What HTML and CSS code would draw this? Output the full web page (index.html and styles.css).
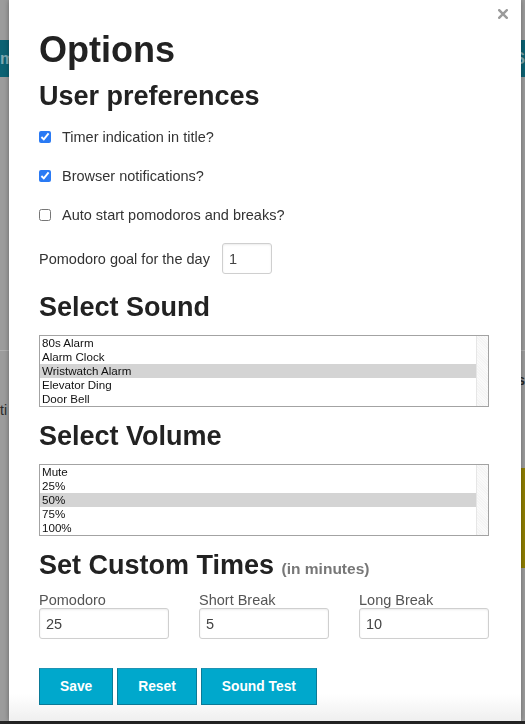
FILE: index.html
```html
<!DOCTYPE html>
<html lang="en">
<head>
<meta charset="utf-8">
<title>Options</title>
<link rel="stylesheet" href="styles.css">
</head>
<body>
<div class="page">
  <div class="band-top"></div>
  <div class="band-teal"><span class="teal-text">m</span><span class="teal-text">S</span></div>
  <div class="band-gap1"></div>
  <div class="band-rule"></div>
  <div class="band-gap2"><span class="bg-text">ti</span><span class="bg-text bold">s</span></div>
  <div class="band-yellow"><div class="yellow-block"></div></div>
  <div class="band-gap3"></div>
  <div class="band-footer"></div>
</div>

<div class="modal" role="dialog" aria-labelledby="opt-title">
  <button class="close" aria-label="Close">
    <svg width="10" height="10" viewBox="0 0 10 10"><path d="M1.2 1.2 L8.8 8.8 M8.8 1.2 L1.2 8.8" stroke="#9b9b9b" stroke-width="2.4" stroke-linecap="square"/></svg>
  </button>

  <h1 class="title" id="opt-title">Options</h1>

  <h2 class="section first">User preferences</h2>
  <label class="check-row"><input type="checkbox" checked><span>Timer indication in title?</span></label>
  <label class="check-row"><input type="checkbox" checked><span>Browser notifications?</span></label>
  <label class="check-row"><input type="checkbox"><span>Auto start pomodoros and breaks?</span></label>

  <div class="goal-row">
    <span>Pomodoro goal for the day</span>
    <input class="goal-input" type="text" value="1">
  </div>

  <h2 class="section">Select Sound</h2>
  <div class="listbox">
    <ul class="options">
      <li>80s Alarm</li>
      <li>Alarm Clock</li>
      <li class="selected">Wristwatch Alarm</li>
      <li>Elevator Ding</li>
      <li>Door Bell</li>
    </ul>
    <div class="track"></div>
  </div>

  <h2 class="section">Select Volume</h2>
  <div class="listbox">
    <ul class="options">
      <li>Mute</li>
      <li>25%</li>
      <li class="selected">50%</li>
      <li>75%</li>
      <li>100%</li>
    </ul>
    <div class="track"></div>
  </div>

  <h2 class="section">Set Custom Times <small>(in minutes)</small></h2>
  <div class="times">
    <label class="field"><span>Pomodoro</span><input type="text" value="25"></label>
    <label class="field"><span>Short Break</span><input type="text" value="5"></label>
    <label class="field"><span>Long Break</span><input type="text" value="10"></label>
  </div>

  <div class="buttons">
    <button class="btn">Save</button>
    <button class="btn">Reset</button>
    <button class="btn">Sound Test</button>
  </div>
</div>
</body>
</html>
```

FILE: styles.css
```css
html, body {
  margin: 0;
  padding: 0;
}

body {
  width: 525px;
  height: 724px;
  overflow: hidden;
  background: #9c9c9c;
  font-family: "Liberation Sans", Arial, sans-serif;
}

.page {
  display: flex;
  flex-direction: column;
}
.band-top { height: 40px; }
.band-teal {
  height: 37px;
  background: #0c6273;
  display: flex;
  justify-content: space-between;
  align-items: center;
  font-weight: bold;
  font-size: 16px;
}
.teal-text { color: #7fa9b1; }
.band-gap1 { height: 273px; }
.band-rule { height: 1px; background: #b0b0b0; }
.band-gap2 {
  height: 117px;
  display: flex;
  justify-content: space-between;
  align-items: center;
  font-size: 14px;
  color: #2a2a2a;
}
.bg-text.bold { font-weight: bold; margin-top: -60px; }
.band-yellow {
  height: 100px;
  display: flex;
  justify-content: flex-end;
}
.yellow-block { width: 10px; background: #8f7e00; }
.band-gap3 { height: 153px; }
.band-footer { height: 3px; background: #262626; }

/* modal */
.modal {
  position: fixed;
  top: 0;
  left: 9px;
  width: 512px;
  height: 721px;
  box-sizing: border-box;
  padding: 30px 32px 0 30px;
  background: linear-gradient(to bottom, #ffffff 0, #ffffff 694px, #efefef 721px);
  box-shadow: 0 0 5px rgba(0, 0, 0, 0.35);
  color: #333;
  font-size: 14.5px;
}

.close {
  position: absolute;
  top: 9px;
  right: 13px;
  width: 10px;
  height: 10px;
  padding: 0;
  border: 0;
  background: none;
  display: flex;
}

.title {
  margin: 0;
  font-size: 36px;
  line-height: 40px;
  font-weight: bold;
  color: #222;
}

.section {
  margin: 14px 0 0;
  font-size: 27px;
  line-height: 30px;
  height: 30px;
  font-weight: bold;
  color: #222;
}
.section.first { margin-top: 11px; }
.section small {
  font-size: 15.5px;
  line-height: 1;
  color: #777;
}

.check-row {
  display: flex;
  align-items: center;
  gap: 11px;
  height: 20px;
  margin-top: 19px;
}
.section.first + .check-row { margin-top: 16px; }
.check-row input {
  margin: 0;
  width: 12px;
  height: 12px;
  accent-color: #2a7af4;
}

.goal-row {
  display: flex;
  align-items: center;
  gap: 12px;
  margin-top: 18px;
  height: 31px;
}
.goal-input {
  width: 50px;
}

input[type="text"] {
  box-sizing: border-box;
  height: 31px;
  margin: 0;
  padding: 0 6px;
  border: 1px solid #cfcfcf;
  border-radius: 3px;
  box-shadow: inset 0 1px 2px rgba(0, 0, 0, 0.08);
  font-family: "Liberation Sans", Arial, sans-serif;
  font-size: 14.5px;
  color: #444;
  background: #fff;
}

.goal-row + .section { margin-top: 18px; }

.listbox {
  margin-top: 13px;
  height: 72px;
  box-sizing: border-box;
  border: 1px solid #a3a3a3;
  display: flex;
  background: #fff;
}
.options {
  list-style: none;
  margin: 0;
  padding: 0;
  flex: 1;
  font-size: 11.6px;
  color: #111;
}
.options li {
  height: 14px;
  line-height: 14px;
  padding-left: 2px;
}
.options li.selected { background: #d4d4d4; }
.track {
  width: 11px;
  border-left: 1px solid #e6e6e6;
  background: repeating-linear-gradient(45deg, #f4f4f4 0, #f4f4f4 1px, #fafafa 1px, #fafafa 2px);
}

.times {
  display: grid;
  grid-template-columns: repeat(3, 130px);
  column-gap: 30px;
  margin-top: 12px;
}
.field {
  display: flex;
  flex-direction: column;
  color: #555;
}
.field span {
  line-height: 16px;
  height: 16px;
}
.field input { width: 130px; }

.buttons {
  display: flex;
  gap: 4px;
  margin-top: 29px;
}
.btn {
  height: 37px;
  padding: 0 20px;
  border: 1px solid #0a7a97;
  border-top-color: #1f93b3;
  background: #00a8cc;
  color: #fff;
  font-family: "Liberation Sans", Arial, sans-serif;
  font-size: 13.8px;
  font-weight: bold;
}
```
